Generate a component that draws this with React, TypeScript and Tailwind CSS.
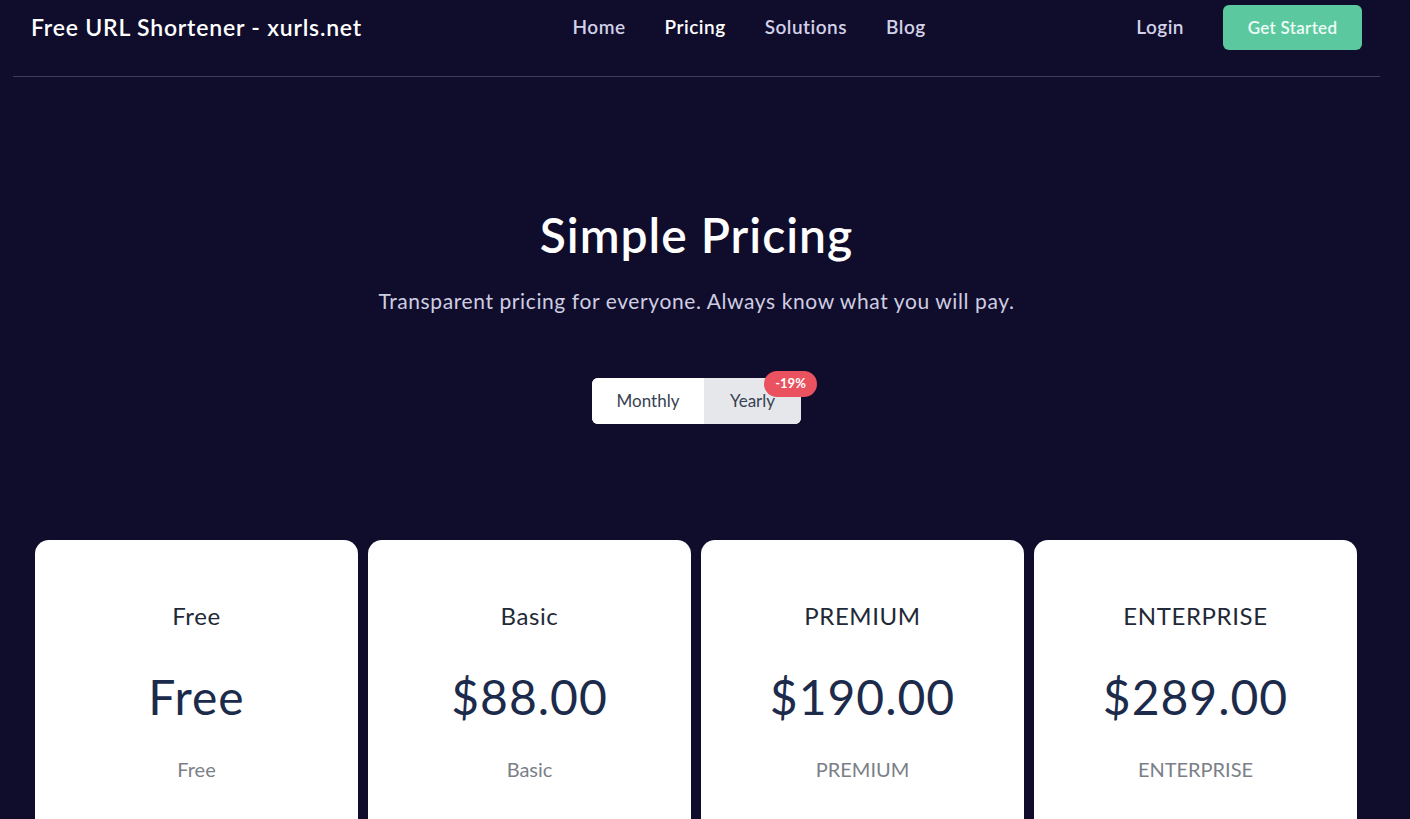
import { useState } from 'react'

const plans = [
  { name: 'Free', price: 'Free', label: 'Free' },
  { name: 'Basic', price: '$88.00', label: 'Basic' },
  { name: 'PREMIUM', price: '$190.00', label: 'PREMIUM' },
  { name: 'ENTERPRISE', price: '$289.00', label: 'ENTERPRISE' },
]

const navLinks = ['Home', 'Pricing', 'Solutions', 'Blog']

export default function App() {
  const [billing, setBilling] = useState<'monthly' | 'yearly'>('monthly')

  return (
    <div
      className="min-h-screen bg-[#100d2c] text-white"
      style={{ fontFamily: 'Lato, "Open Sans", sans-serif' }}
    >
      <div className="w-[1393px]">
        {/* Header */}
        <header className="mx-[13px] border-b border-[#3d3b5e] pt-[5px] pb-[26px]">
          <div className="flex h-[45px] items-center justify-between px-[18px]">
            <a href="#" className="text-[23px] font-semibold tracking-[0.8px] text-white">
              Free URL Shortener - xurls.net
            </a>
            <nav className="flex items-center gap-[39px]">
              {navLinks.map((link) => (
                <a
                  key={link}
                  href="#"
                  className={`text-[19px] font-semibold tracking-[0.5px] ${link === 'Pricing' ? 'text-white' : 'text-[#d3d1e8]'}`}
                >
                  {link}
                </a>
              ))}
            </nav>
            <div className="flex items-center gap-[39px]">
              <a href="#" className="text-[19px] font-semibold tracking-[0.5px] text-[#d3d1e8]">
                Login
              </a>
              <button className="h-[45px] w-[139px] rounded-md bg-[#5cc8a0] text-[17px] font-semibold tracking-[0.3px] text-[#effcf6]">
                Get Started
              </button>
            </div>
          </div>
        </header>

        {/* Hero */}
        <section className="flex flex-col items-center pt-[134px]">
          <h1 className="text-[48px] font-semibold leading-none tracking-[1px] text-white">Simple Pricing</h1>
          <p className="mt-[31px] text-[21px] leading-none tracking-[0.6px] text-[#cfcde2]">
            Transparent pricing for everyone. Always know what you will pay.
          </p>

          <div className="mt-[67px] flex h-[46px] rounded-md bg-white">
            <button
              onClick={() => setBilling('monthly')}
              className={`w-[112px] rounded-l-md text-[17px] text-[#374151] ${billing === 'monthly' ? 'bg-white' : 'bg-[#e5e7eb]'}`}
            >
              Monthly
            </button>
            <button
              onClick={() => setBilling('yearly')}
              className={`relative w-[97px] rounded-r-md text-[17px] text-[#374151] ${billing === 'yearly' ? 'bg-white' : 'bg-[#e5e7eb]'}`}
            >
              Yearly
              <span className="absolute -right-[16px] -top-[7px] flex h-[26px] w-[53px] items-center justify-center rounded-full bg-[#e9525e] text-[13px] font-bold text-white">
                -19%
              </span>
            </button>
          </div>
        </section>

        {/* Plans */}
        <section className="mt-[116px] flex gap-[10px] px-[35px]">
          {plans.map((plan) => (
            <div
              key={plan.name}
              className="flex min-h-[420px] w-[323px] flex-col items-center rounded-[14px] bg-white pt-[64px]"
            >
              <h3 className="text-[24px] leading-none tracking-[0.6px] text-[#1f2937]">{plan.name}</h3>
              <div className="mt-[45px] text-[48px] leading-none tracking-[1px] text-[#1c2b4b]">{plan.price}</div>
              <p className="mt-[38px] text-[20px] leading-none text-[#7b7f88]">{plan.label}</p>
            </div>
          ))}
        </section>
      </div>
    </div>
  )
}
